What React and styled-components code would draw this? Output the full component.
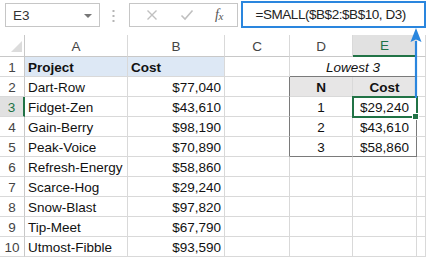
import React from 'react';
import styled, { createGlobalStyle } from 'styled-components';

const GlobalStyle = createGlobalStyle`
  html, body {
    margin: 0;
    padding: 0;
    background: #ffffff;
    overflow: hidden;
  }
  body {
    font-family: "Liberation Sans", Arial, sans-serif;
  }
`;

const GRID = '#d9d9d9';
const BOX = '#7a7a7a';
const GREEN = '#217346';
const BLUE = '#2a86de';

const Page = styled.div`
  position: relative;
  width: 426px;
  height: 258px;
  overflow: hidden;
  background: #fff;
`;

const FormulaBar = styled.div`
  display: flex;
  align-items: flex-start;
  height: 30px;
  margin-bottom: 5px;
`;

const NameBox = styled.div`
  box-sizing: border-box;
  display: flex;
  align-items: center;
  justify-content: space-between;
  margin: 3px 0 0 5px;
  width: 95px;
  height: 24px;
  padding: 0 7px 0 7px;
  border: 1px solid #c6c6c6;
  font-size: 13.5px;
  color: #333;
`;

const Caret = styled.span`
  width: 0;
  height: 0;
  border-left: 4px solid transparent;
  border-right: 4px solid transparent;
  border-top: 4px solid #777;
  margin-top: 1px;
`;

const Dots = styled.svg`
  margin: 9px 0 0 11px;
  width: 5px;
  height: 14px;
`;

const Buttons = styled.div`
  box-sizing: border-box;
  display: flex;
  align-items: center;
  justify-content: space-around;
  margin: 3px 0 0 13px;
  width: 110px;
  height: 24px;
  border: 1px solid #c6c6c6;
  padding: 0 4px 0 6px;
`;

const Fx = styled.span`
  font-family: "Liberation Serif", "Times New Roman", serif;
  font-style: italic;
  font-size: 14px;
  color: #555;
  letter-spacing: -0.5px;
  sub {
    font-size: 11px;
    vertical-align: baseline;
    position: relative;
    top: 1px;
  }
`;

const FormulaInput = styled.div`
  box-sizing: border-box;
  display: flex;
  align-items: center;
  margin: 1px 0 0 3px;
  width: 185px;
  height: 27px;
  border: 2px solid ${BLUE};
  padding: 0 0 0 12px;
  font-size: 13.5px;
  letter-spacing: -0.45px;
  color: #222;
`;

const Sheet = styled.div`
  position: relative;
  display: grid;
  grid-template-columns: 25px 103px 97px 65px 63px 64px 9px;
  grid-template-rows: 22px repeat(10, 20px);
`;

const Corner = styled.div`
  box-sizing: border-box;
  border-right: 1px solid #c8c8c8;
  border-bottom: 1px solid #c8c8c8;
  display: flex;
  align-items: flex-end;
  justify-content: flex-end;
  padding: 0 2px 4px 0;
`;

const ColHead = styled.div`
  box-sizing: border-box;
  display: flex;
  align-items: center;
  justify-content: center;
  font-size: 13.5px;
  color: ${p => (p.$active ? GREEN : '#444')};
  background: ${p => (p.$active ? '#e1e1e1' : '#fff')};
  border-right: 1px solid ${GRID};
  border-bottom: ${p => (p.$active ? `2px solid ${GREEN}` : '1px solid #c8c8c8')};
  padding-top: 1px;
`;

const RowHead = styled.div`
  box-sizing: border-box;
  display: flex;
  align-items: center;
  justify-content: center;
  font-size: 13.5px;
  color: ${p => (p.$active ? GREEN : '#444')};
  background: ${p => (p.$active ? '#e1e1e1' : '#fff')};
  border-right: ${p => (p.$active ? `2px solid ${GREEN}` : '1px solid #c8c8c8')};
  border-bottom: 1px solid ${GRID};
  padding-top: 2px;
`;

const Cell = styled.div`
  box-sizing: border-box;
  display: flex;
  align-items: center;
  justify-content: ${p => p.$align || 'flex-start'};
  grid-column: ${p => (p.$span ? `span ${p.$span}` : 'auto')};
  padding: 2px 3px 0 3px;
  font-size: 13.5px;
  color: #111;
  white-space: nowrap;
  font-weight: ${p => (p.$bold ? 700 : 400)};
  font-style: ${p => (p.$italic ? 'italic' : 'normal')};
  background: ${p => p.$fill || '#fff'};
  border-right: 1px solid ${p => (p.$boxRight ? BOX : GRID)};
  border-bottom: 1px solid ${p => (p.$boxBottom ? BOX : GRID)};
`;

const Selection = styled.div`
  position: absolute;
  left: 352px;
  top: 61px;
  width: 66px;
  height: 22px;
  box-sizing: border-box;
  border: 2px solid ${GREEN};
  pointer-events: none;
`;

const Handle = styled.span`
  position: absolute;
  right: -3px;
  bottom: -4px;
  width: 5px;
  height: 5px;
  background: ${GREEN};
  border: 1px solid #fff;
`;

const Arrow = styled.svg`
  position: absolute;
  left: 408px;
  top: 27px;
  width: 16px;
  height: 72px;
`;

const projects = [
  ['Dart-Row', '$77,040'],
  ['Fidget-Zen', '$43,610'],
  ['Gain-Berry', '$98,190'],
  ['Peak-Voice', '$70,890'],
  ['Refresh-Energy', '$58,860'],
  ['Scarce-Hog', '$29,240'],
  ['Snow-Blast', '$97,820'],
  ['Tip-Meet', '$67,790'],
  ['Utmost-Fibble', '$93,590'],
];

const lowest = [
  ['1', '$29,240'],
  ['2', '$43,610'],
  ['3', '$58,860'],
];

const columns = ['A', 'B', 'C', 'D', 'E', ''];

function Row({ n }) {
  const inBox = n >= 2 && n <= 5;
  const last = n === 5;
  let a, b, d, e;

  if (n === 1) {
    a = <Cell $bold $fill="#dde8f5">Project</Cell>;
    b = <Cell $bold $fill="#dde8f5">Cost</Cell>;
  } else {
    const [name, cost] = projects[n - 2];
    a = <Cell>{name}</Cell>;
    b = <Cell $align="flex-end">{cost}</Cell>;
  }

  if (n === 1) {
    d = <Cell $span={2} $italic $align="center" $boxBottom>Lowest 3</Cell>;
  } else if (n === 2) {
    d = <Cell $bold $align="center" $fill="#e7e6e6">N</Cell>;
    e = <Cell $bold $align="center" $fill="#e7e6e6" $boxRight>Cost</Cell>;
  } else if (inBox) {
    const [k, v] = lowest[n - 3];
    d = <Cell $align="center" $boxBottom={last}>{k}</Cell>;
    e = <Cell $align="center" $boxRight $boxBottom={last}>{v}</Cell>;
  } else {
    d = <Cell />;
    e = <Cell />;
  }

  return (
    <>
      <RowHead $active={n === 3}>{n}</RowHead>
      {a}
      {b}
      <Cell $boxRight={inBox} />
      {d}
      {e}
      <Cell />
    </>
  );
}

export default function App() {
  return (
    <Page>
      <GlobalStyle />
      <FormulaBar>
        <NameBox>
          E3
          <Caret />
        </NameBox>
        <Dots viewBox="0 0 5 14">
          <rect x="1.5" y="1" width="2" height="2" fill="#b5b5b5" />
          <rect x="1.5" y="6" width="2" height="2" fill="#b5b5b5" />
          <rect x="1.5" y="11" width="2" height="2" fill="#b5b5b5" />
        </Dots>
        <Buttons>
          <svg width="12" height="12" viewBox="0 0 12 12">
            <path d="M1.5 1.5 L10.5 10.5 M10.5 1.5 L1.5 10.5" stroke="#c0c0c0" strokeWidth="1.4" fill="none" />
          </svg>
          <svg width="14" height="12" viewBox="0 0 14 12">
            <path d="M1.5 6.5 L5 10 L12.5 1.5" stroke="#c0c0c0" strokeWidth="1.6" fill="none" />
          </svg>
          <Fx>f<sub>x</sub></Fx>
        </Buttons>
        <FormulaInput>=SMALL($B$2:$B$10, D3)</FormulaInput>
      </FormulaBar>

      <Sheet>
        <Corner>
          <svg width="11" height="11" viewBox="0 0 11 11">
            <path d="M11 0 L11 11 L0 11 Z" fill="#dcdcdc" />
          </svg>
        </Corner>
        {columns.map((c, i) => (
          <ColHead key={i} $active={c === 'E'}>{c}</ColHead>
        ))}
        {Array.from({ length: 10 }, (_, i) => (
          <Row key={i} n={i + 1} />
        ))}
        <Selection>
          <Handle />
        </Selection>
      </Sheet>

      <Arrow viewBox="0 0 16 72">
        <path d="M8 14 L8 71" stroke={BLUE} strokeWidth="2.2" />
        <path d="M8 1 L13.5 15 L8 12.5 L2.5 15 Z" fill={BLUE} />
      </Arrow>
    </Page>
  );
}
